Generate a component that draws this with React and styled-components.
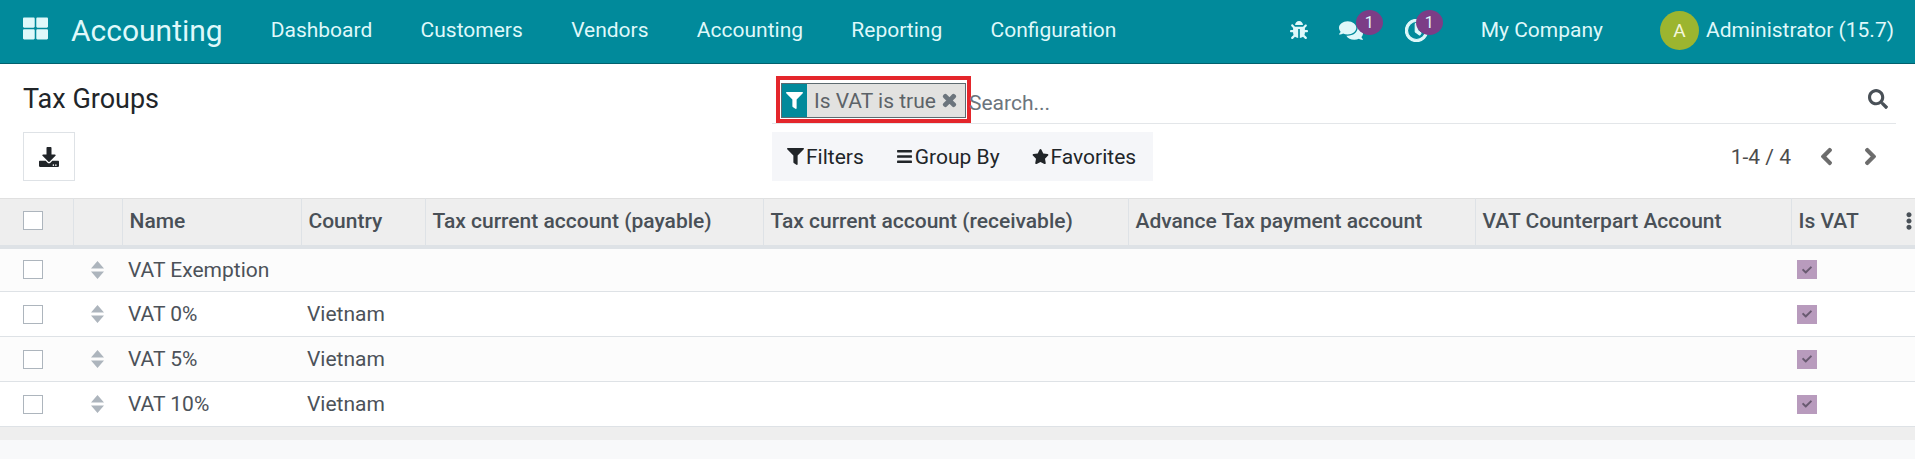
import styled, { createGlobalStyle } from "styled-components";
import {
  FaBars, FaBug, FaCheck, FaChevronLeft, FaChevronRight, FaComments, FaDownload,
  FaEllipsisV, FaFilter, FaRegClock, FaSearch, FaStar, FaThLarge, FaTimes,
} from "react-icons/fa";

const GlobalStyle = createGlobalStyle`
  html, body { margin: 0; padding: 0; background: #f8f9fa; }
  body { font-family: Roboto, "Liberation Sans", sans-serif; color: #4c4c4c; }
`;

const Page = styled.div`
  width: 1915px;
  height: 459px;
  overflow: hidden;
  background: #f8f9fa;
`;

const NavBar = styled.header`
  height: 60px;
  display: flex;
  align-items: center;
  background: #018a9b;
  border-bottom: 1px solid #01616e;
  color: #dff8fa;
  font-size: 21px;
  padding: 0 21px 3px 23px;
`;

const AppIcon = styled(FaThLarge)`
  width: 25px;
  height: 25px;
  margin: -4px 23px 0 0;
`;

const Brand = styled.span`
  font-size: 30px;
  margin-right: 48px;
`;

const NavLink = styled.span`
  margin-right: 48.3px;
`;

const Systray = styled.div`
  margin-left: auto;
  display: flex;
  align-items: center;
`;

const TrayIcon = styled.span`
  position: relative;
  display: flex;
  width: 24px;
  height: 24px;
  align-items: center;
  justify-content: center;
  font-size: ${(p) => p.$size}px;
  margin-left: ${(p) => p.$ml || 0}px;
  svg { stroke: currentColor; stroke-width: ${(p) => p.$bold || 0}px; }
`;

const Badge = styled.span`
  position: absolute;
  top: -8px;
  left: ${(p) => p.$left}px;
  width: 27px;
  height: 25px;
  border-radius: 50%;
  background: #7c3d86;
  color: #dff8fa;
  font-size: 16px;
  line-height: 25px;
  text-align: center;
`;

const Company = styled.span`
  margin-left: 52px;
  margin-right: 57px;
`;

const Avatar = styled.span`
  width: 39px;
  height: 39px;
  border-radius: 50%;
  background: #9cb52f;
  color: #f4f7dc;
  font-size: 19px;
  line-height: 39px;
  display: flex;
  align-items: center;
  justify-content: center;
  margin-right: 7px;
`;

const ControlPanel = styled.section`
  display: grid;
  grid-template-columns: 749px 1fr;
  background: #fff;
  padding: 12px 19px 17px 23px;
`;

const LeftSide = styled.div`
  display: flex;
  flex-direction: column;
  align-items: flex-start;
`;

const Title = styled.h1`
  margin: 0 0 10px;
  height: 46px;
  display: flex;
  align-items: center;
  font-size: 27px;
  font-weight: 400;
  color: #212529;
`;

const IconButton = styled.button`
  width: 52px;
  height: 49px;
  background: #fff;
  border: 1px solid #dee2e6;
  display: flex;
  align-items: center;
  justify-content: center;
  font-size: 20px;
  color: #212529;
  padding: 0;
`;

const RightSide = styled.div`
  display: flex;
  flex-direction: column;
`;

const SearchRow = styled.div`
  height: 47px;
  display: flex;
  align-items: flex-start;
  padding-left: 4px;
  border-bottom: 1px solid #e3e6e9;
`;

const Highlight = styled.div`
  border: 4px solid #e4262b;
  padding: 3px 1px 1px;
  height: 47px;
  box-sizing: border-box;
  margin-bottom: -1px;
`;

const Facet = styled.div`
  height: 35px;
  box-sizing: border-box;
  width: 185px;
  display: flex;
  align-items: center;
  background: #e2e2e0;
  border: 1px solid #5d6b70;
  font-size: 21px;
  color: #5c6368;
`;

const FacetIcon = styled.span`
  width: 25px;
  align-self: stretch;
  background: #018a9b;
  color: #fff;
  display: flex;
  align-items: center;
  justify-content: center;
  font-size: 17px;
  margin-right: 7px;
`;

const FacetRemove = styled(FaTimes)`
  margin-left: 5px;
  font-size: 17px;
  color: #6c757d;
  stroke: currentColor;
  stroke-width: 50px;
`;

const SearchText = styled.span`
  margin-left: -2px;
  margin-top: 15px;
  font-size: 21px;
  color: #6c757d;
`;

const SearchIcon = styled(FaSearch)`
  margin-left: auto;
  margin-top: 13px;
  margin-right: 8px;
  font-size: 20px;
  color: #495057;
`;

const BottomRow = styled.div`
  margin-top: 8px;
  display: flex;
  align-items: center;
  justify-content: space-between;
`;

const FilterBar = styled.div`
  width: 381px;
  height: 49px;
  box-sizing: border-box;
  padding-left: 15px;
  display: flex;
  align-items: center;
  gap: 32px;
  background: #f5f6f9;
  font-size: 21px;
  color: #212529;
`;

const FilterItem = styled.span`
  display: flex;
  align-items: center;
  gap: 2px;
  svg { font-size: 17px; }
`;

const Pager = styled.div`
  display: flex;
  align-items: center;
  font-size: 21px;
  color: #4c4c4c;
  svg { font-size: 19px; color: #6c6c6c; stroke: currentColor; stroke-width: 30px; }
`;

const PagerText = styled.span`
  margin-right: 26px;
`;

const PagerNext = styled(FaChevronRight)`
  margin-left: 25px;
  margin-right: 16px;
`;

const Table = styled.table`
  width: 1915px;
  table-layout: fixed;
  border-collapse: collapse;
  font-size: 21px;
`;

const HeadRow = styled.tr`
  height: 48px;
  background: #eee;
  border-top: 1px solid #e0e0e0;
  border-bottom: 4px solid #dee2e6;
`;

const Th = styled.th`
  padding: 0 0 2px 7px;
  text-align: left;
  font-weight: 500;
  color: #495057;
  border-left: 1px solid #dee2e6;
  position: relative;
  &:first-child { border-left: 0; padding-left: 23px; }
`;

const Row = styled.tr`
  height: 45px;
  background: ${(p) => (p.$odd ? "#fcfcfc" : "#fff")};
  border-bottom: 1px solid #dee2e6;
`;

const Td = styled.td`
  padding: 0 0 0 6px;
  color: #4c5259;
  &:first-child { padding-left: 23px; }
`;

const CheckBox = styled.span`
  display: block;
  width: 20px;
  height: 19px;
  box-sizing: border-box;
  background: #fff;
  border: 1px solid #adb5bd;
`;

const CheckedBox = styled.span`
  display: flex;
  align-items: center;
  justify-content: center;
  width: 20px;
  height: 19px;
  background: #b89bbd;
  color: #685a70;
  font-size: 10px;
`;

const Handle = styled.svg`
  display: block;
  width: 13px;
  height: 18px;
  margin-left: 12px;
  fill: #adb5bd;
`;

const KebabIcon = styled(FaEllipsisV)`
  position: absolute;
  right: -3px;
  top: 13px;
  font-size: 18px;
  color: #495057;
`;

const Footer = styled.div`
  height: 13px;
  background: #eee;
`;

const menus = ["Dashboard", "Customers", "Vendors", "Accounting", "Reporting", "Configuration"];
const columns = [
  { w: 73 },
  { w: 49 },
  { w: 179, label: "Name" },
  { w: 124, label: "Country" },
  { w: 338, label: "Tax current account (payable)" },
  { w: 365, label: "Tax current account (receivable)" },
  { w: 347, label: "Advance Tax payment account" },
  { w: 316, label: "VAT Counterpart Account" },
  { w: 124, label: "Is VAT" },
];
const groups = [
  { name: "VAT Exemption", country: "" },
  { name: "VAT 0%", country: "Vietnam" },
  { name: "VAT 5%", country: "Vietnam" },
  { name: "VAT 10%", country: "Vietnam" },
];

function App() {
  return (
    <Page>
      <GlobalStyle />
      <NavBar>
        <AppIcon />
        <Brand>Accounting</Brand>
        {menus.map((m) => (
          <NavLink key={m}>{m}</NavLink>
        ))}
        <Systray>
          <TrayIcon $size={18}><FaBug /></TrayIcon>
          <TrayIcon $size={25} $ml={28}>
            <FaComments />
            <Badge $left={17}>1</Badge>
          </TrayIcon>
          <TrayIcon $size={23} $ml={42} $bold={25}>
            <FaRegClock />
            <Badge $left={11}>1</Badge>
          </TrayIcon>
          <Company>My Company</Company>
          <Avatar>A</Avatar>
          <span>Administrator (15.7)</span>
        </Systray>
      </NavBar>

      <ControlPanel>
        <LeftSide>
          <Title>Tax Groups</Title>
          <IconButton><FaDownload /></IconButton>
        </LeftSide>
        <RightSide>
          <SearchRow>
            <Highlight>
              <Facet>
                <FacetIcon><FaFilter /></FacetIcon>
                Is VAT is true
                <FacetRemove />
              </Facet>
            </Highlight>
            <SearchText>Search...</SearchText>
            <SearchIcon />
          </SearchRow>
          <BottomRow>
            <FilterBar>
              <FilterItem><FaFilter />Filters</FilterItem>
              <FilterItem><FaBars />Group By</FilterItem>
              <FilterItem><FaStar />Favorites</FilterItem>
            </FilterBar>
            <Pager>
              <PagerText>1-4 / 4</PagerText>
              <FaChevronLeft />
              <PagerNext />
            </Pager>
          </BottomRow>
        </RightSide>
      </ControlPanel>

      <Table>
        <colgroup>
          {columns.map((c, i) => (
            <col key={i} width={c.w} />
          ))}
        </colgroup>
        <thead>
          <HeadRow>
            {columns.map((c, i) => (
              <Th key={i}>
                {i === 0 && <CheckBox />}
                {c.label}
                {i === 8 && <KebabIcon />}
              </Th>
            ))}
          </HeadRow>
        </thead>
        <tbody>
          {groups.map((g, i) => (
            <Row key={g.name} $odd={i % 2 === 0}>
              <Td><CheckBox /></Td>
              <Td>
                <Handle viewBox="0 0 13 18">
                  <path d="M6.5 0 L13 7.5 H0 Z M0 10.5 H13 L6.5 18 Z" />
                </Handle>
              </Td>
              <Td>{g.name}</Td>
              <Td>{g.country}</Td>
              <Td />
              <Td />
              <Td />
              <Td />
              <Td><CheckedBox><FaCheck /></CheckedBox></Td>
            </Row>
          ))}
        </tbody>
      </Table>
      <Footer />
    </Page>
  );
}

export default App;
